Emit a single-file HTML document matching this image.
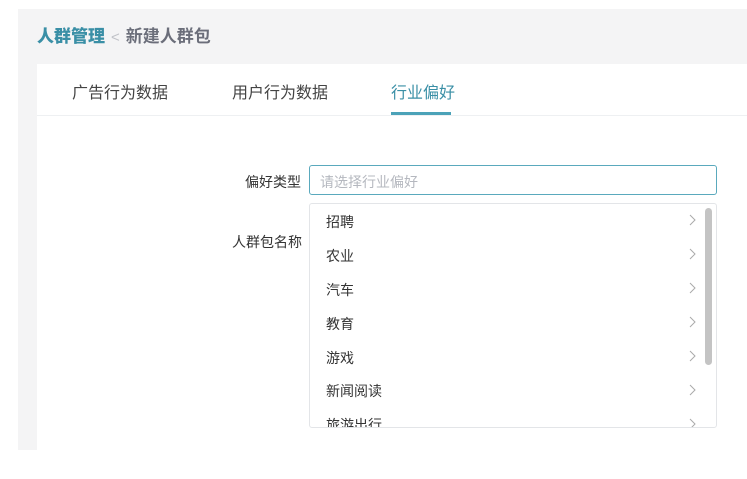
<!DOCTYPE html>
<html><head><meta charset="utf-8"><style>
*{margin:0;padding:0;box-sizing:border-box}
body{width:747px;height:479px;background:#fff;position:relative;overflow:hidden;font-family:"Liberation Sans","Noto Sans CJK SC",sans-serif}
.gray{position:absolute;left:18px;top:9px;width:729px;height:441px;background:#f4f4f5}
.card{position:absolute;left:37px;top:64px;width:710px;height:386px;background:#fff}
.bc{position:absolute;left:37px;top:22px;font-size:17px;color:#6b6e7a;font-weight:bold}
.bc b{color:#3a8fa6}
.bc i{font-style:normal;color:#c0c2c8;margin:0 6px;font-size:15px;font-weight:normal}
.tab{position:absolute;top:79px;font-size:16px;color:#444}
.line{position:absolute;left:37px;top:115px;width:710px;height:1px;background:#eef0f2}
.ul{position:absolute;left:391px;top:112px;width:60px;height:3px;background:#4ba2b8}
.lab{position:absolute;font-size:14px;color:#333}
.inp{position:absolute;left:309px;top:165px;width:408px;height:30px;border:1px solid #5aa9bd;border-radius:3px;font-size:14px;color:#b5b8bf;padding:6px 10px}
.dd{position:absolute;left:309px;top:203px;width:408px;height:225px;border:1px solid #e3e5e8;border-radius:3px;overflow:hidden}
.it{position:absolute;left:16px;font-size:14px;color:#333}
.ar{position:absolute;left:379px;width:7px;height:12px}
.sb{position:absolute;left:395px;top:4px;width:7px;height:157px;border-radius:4px;background:#c4c4c4}
</style></head><body>
<div class="gray"></div><div class="card"></div>
<div class="bc"><b>人群管理</b><i>&lt;</i>新建人群包</div>
<div class="tab" style="left:72px">广告行为数据</div>
<div class="tab" style="left:232px">用户行为数据</div>
<div class="tab" style="left:391px;color:#3a8fa6">行业偏好</div>
<div class="line"></div><div class="ul"></div>
<div class="lab" style="left:245px;top:172px">偏好类型</div>
<div class="lab" style="left:232px;top:232px">人群包名称</div>
<div class="inp">请选择行业偏好</div>
<div class="dd">
<div class="it" style="top:8px">招聘</div>
<div class="it" style="top:42px">农业</div>
<div class="it" style="top:76px">汽车</div>
<div class="it" style="top:110px">教育</div>
<div class="it" style="top:144px">游戏</div>
<div class="it" style="top:177px">新闻阅读</div>
<div class="it" style="top:211px">旅游出行</div>
<svg class="ar" style="top:10px" viewBox="0 0 7 12"><path d="M1 1l5 5-5 5" fill="none" stroke="#aaa"/></svg>
<svg class="ar" style="top:44px" viewBox="0 0 7 12"><path d="M1 1l5 5-5 5" fill="none" stroke="#aaa"/></svg>
<svg class="ar" style="top:78px" viewBox="0 0 7 12"><path d="M1 1l5 5-5 5" fill="none" stroke="#aaa"/></svg>
<svg class="ar" style="top:112px" viewBox="0 0 7 12"><path d="M1 1l5 5-5 5" fill="none" stroke="#aaa"/></svg>
<svg class="ar" style="top:146px" viewBox="0 0 7 12"><path d="M1 1l5 5-5 5" fill="none" stroke="#aaa"/></svg>
<svg class="ar" style="top:180px" viewBox="0 0 7 12"><path d="M1 1l5 5-5 5" fill="none" stroke="#aaa"/></svg>
<svg class="ar" style="top:214px" viewBox="0 0 7 12"><path d="M1 1l5 5-5 5" fill="none" stroke="#aaa"/></svg>
<div class="sb"></div>
</div>
</body></html>
